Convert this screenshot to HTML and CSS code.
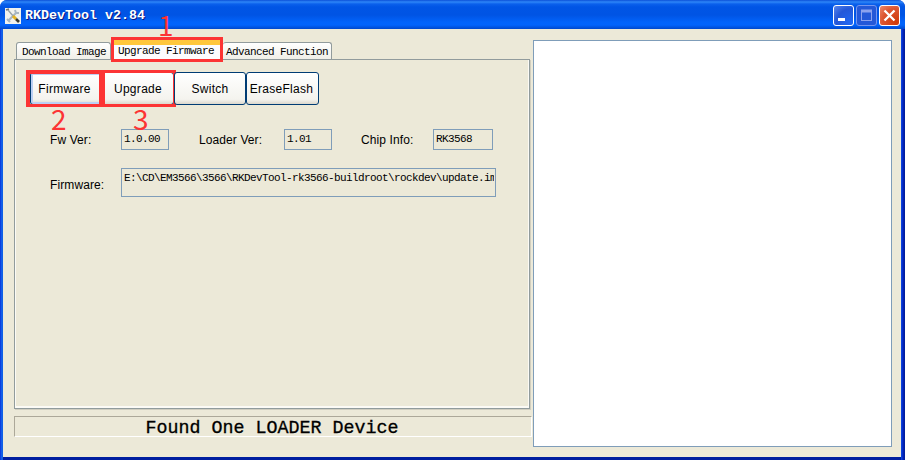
FILE: index.html
```
<!DOCTYPE html>
<html lang="en">
<head>
<meta charset="utf-8">
<title>RKDevTool v2.84</title>
<link rel="stylesheet" href="styles.css">
</head>
<body>
<div class="window">
  <header class="titlebar">
    <svg class="app-icon" width="16" height="16" viewBox="0 0 16 16">
      <rect width="16" height="16" fill="#f1f2ee"/>
      <path d="M3 13L11 5" stroke="#a8b6c2" stroke-width="2.2"/>
      <path d="M2 11L5 14M10 2L11 5L14 5" stroke="#a8b6c2" stroke-width="2" fill="none"/>
      <path d="M3 2L9 9" stroke="#9aa3a8" stroke-width="1.4"/>
      <path d="M8 8L11 11" stroke="#e6b422" stroke-width="3"/>
      <path d="M11 11L14 14" stroke="#3a3a30" stroke-width="2.6"/>
      <path d="M1 2L4 1" stroke="#777" stroke-width="1.4"/>
    </svg>
    <h1 class="title">RKDevTool v2.84</h1>
    <div class="controls">
      <span class="control"><svg width="21" height="21"><path d="M5 14.5H12" stroke="#fff" stroke-width="3"/></svg></span>
      <span class="control disabled"><svg width="21" height="21"><path d="M5 6H16" stroke="#8ca2ee" stroke-width="3"/><rect x="5.500" y="5.500" width="10" height="10" fill="none" stroke="#8ca2ee"/></svg></span>
      <span class="control close"><svg width="21" height="21"><path d="M5.500 5.500L15.500 15.500M15.500 5.500L5.500 15.500" stroke="#fff" stroke-width="2.300"/></svg></span>
    </div>
  </header>
  <main class="client">
    <section class="left">
      <nav class="tabs">
        <div class="tab first">Download Image</div>
        <div class="tab active">Upgrade Firmware<span class="mark mark-tab"></span><b class="num num-one">1</b></div>
        <div class="tab last">Advanced Function</div>
      </nav>
      <div class="panel">
        <div class="buttons">
          <div class="button focused">Firmware<span class="mark mark-firmware"></span><b class="num num-two">2</b></div>
          <div class="button">Upgrade<span class="mark mark-upgrade"></span><b class="num num-three">3</b></div>
          <div class="button">Switch</div>
          <div class="button">EraseFlash</div>
        </div>
        <div class="info">
          <span class="label">Fw Ver:</span><div class="field">1.0.00</div>
          <span class="label">Loader Ver:</span><div class="field">1.01</div>
          <span class="label">Chip Info:</span><div class="field">RK3568</div>
        </div>
        <div class="path">
          <span class="label">Firmware:</span><div class="field tall"><span class="clip">E:\CD\EM3566\3566\RKDevTool-rk3566-buildroot\rockdev\update.im</span></div>
        </div>
      </div>
      <div class="status">Found One LOADER Device</div>
    </section>
    <section class="log"></section>
  </main>
</div>
</body>
</html>
```
FILE: styles.css
```
* { box-sizing: border-box; }
body { margin: 0; background: #fff; overflow: hidden; }
.window {
  width: 905px;
  height: 460px;
  display: flex;
  flex-direction: column;
  border-radius: 7px 7px 0 0;
  background: linear-gradient(90deg, #0831d9, #166aee 2px, #0855dd 3px, #0855dd 901px, #0831d9 902px, #001ea0 904px);
  overflow: hidden;
}
.titlebar {
  flex: 0 0 29px;
  display: flex;
  align-items: center;
  padding: 2px 5px 0;
  background: linear-gradient(#0b50d8 0, #2d86f8 2px, #0a60ec 4px, #0055e5 7px, #0054e4 15px, #0263fa 22px, #0264fc 25px, #0048cc 29px);
}
.title {
  margin: 0 0 0 4px;
  flex: 1;
  color: #fff;
  font: bold 13.333px/16px "Liberation Mono", monospace;
  text-shadow: 1px 1px #0a1883;
}
.controls { display: flex; gap: 2px; }
.control {
  width: 21px;
  height: 21px;
  border: 1px solid #fff;
  border-radius: 3px;
  background: radial-gradient(circle at 90% 90%, #2068f4, #2458d8 60%, #5a86ec);
}
.control svg { display: block; margin: -1px; }
.control.disabled { border-color: #7595ef; background: #2458d8; }
.control.close { background: radial-gradient(circle at 85% 85%, #cf3a08, #dc5530 60%, #ec8a6d); }
.client {
  flex: 1;
  display: flex;
  margin: 0 4px 0 3px;
  padding: 11px 9px 10px 11px;
  border-bottom: 3px solid #001ea0;
  background: #ece9d8;
  gap: 1px;
}
.left { width: 518px; display: flex; flex-direction: column; }
.log { width: 359px; height: 407px; border: 1px solid #7f9db9; background: #fff; }
.tabs { display: flex; align-items: flex-end; height: 19px; padding-left: 2px; }
.tab {
  height: 17px;
  border: 1px solid #919b9c;
  border-bottom: 0;
  border-radius: 3px 3px 0 0;
  background: linear-gradient(#fff, #f0efe8);
  color: #000;
  font: 11px/19px "Liberation Mono", monospace;
  letter-spacing: -0.6px;
  white-space: nowrap;
}
.tab.first { width: 95px; padding-left: 5px; }
.tab.active {
  position: relative;
  z-index: 1;
  width: 112px;
  height: 20px;
  margin-bottom: -1px;
  padding-left: 7px;
  border: 0;
  border-top: 5px solid #ffc73c;
  background: #fcfcfe;
  line-height: 13px;
}
.tab.last { width: 109px; padding-left: 3px; border-left: 0; }
.mark { position: absolute; border: 3px solid #fc3434; pointer-events: none; }
.mark-tab { left: 0; top: -8px; width: 112px; height: 25px; }
.num {
  position: absolute;
  color: #fc3434;
  font: 28px/28px "Noto Sans CJK SC", sans-serif;
  letter-spacing: 0;
}
.num-one { left: 47px; top: -35px; }
.panel {
  width: 516px;
  height: 350px;
  border: 1px solid #919b9c;
  padding: 12px 0 0 15px;
  box-shadow: inset 1px 0 #fbfaf5, inset -1px -2px #fbfaf5, 1px 1px #d0cec0;
}
.buttons { display: flex; }
.button {
  position: relative;
  width: 72px;
  height: 33px;
  border: 1px solid #003c74;
  border-radius: 3px;
  background: linear-gradient(#fff, #f4f3ee 85%, #dcd8cd);
  font: 12px/32px "Liberation Sans", Arial, sans-serif;
  letter-spacing: 0.3px;
  text-align: center;
}
.button:last-child { width: 73px; padding-right: 2px; }
.button.focused { padding-right: 3px; box-shadow: inset 0 0 0 2px #bcd0f4; }
.mark-firmware { left: -5px; top: -3px; width: 77px; height: 37px; border-width: 4px 4px 3px; }
.mark-upgrade { left: -1px; top: -3px; width: 74px; height: 37px; }
.num-two { left: 20px; top: 31px; }
.num-three { left: 30px; top: 31px; }
.info, .path {
  display: grid;
  padding-left: 20px;
}
.info { grid-template-columns: 71px 78px 85px 77px 72px 60px; margin-top: 24px; }
.path { grid-template-columns: 71px 375px; margin-top: 17px; }
.label {
  font: 12px/22px "Liberation Sans", Arial, sans-serif;
  letter-spacing: 0.1px;
}
.path .label { line-height: 34px; }
.field {
  width: 48px;
  height: 21px;
  border: 1px solid #7f9db9;
  padding: 0 2px;
  font: 11px/19px "Liberation Mono", monospace;
  letter-spacing: -0.6px;
  white-space: nowrap;
}
.info .field:last-child { width: 60px; }
.field.tall { width: 375px; height: 29px; }
.clip { display: block; width: 370px; overflow: hidden; }
.status {
  width: 518px;
  height: 21px;
  margin-top: 7px;
  border: 1px solid;
  border-color: #aca899 #fff #fff #aca899;
  color: #000;
  font: 18.333px/23px "Liberation Mono", monospace;
  text-align: center;
  text-indent: -2px;
  -webkit-text-stroke: 0.3px #000;
}
```
